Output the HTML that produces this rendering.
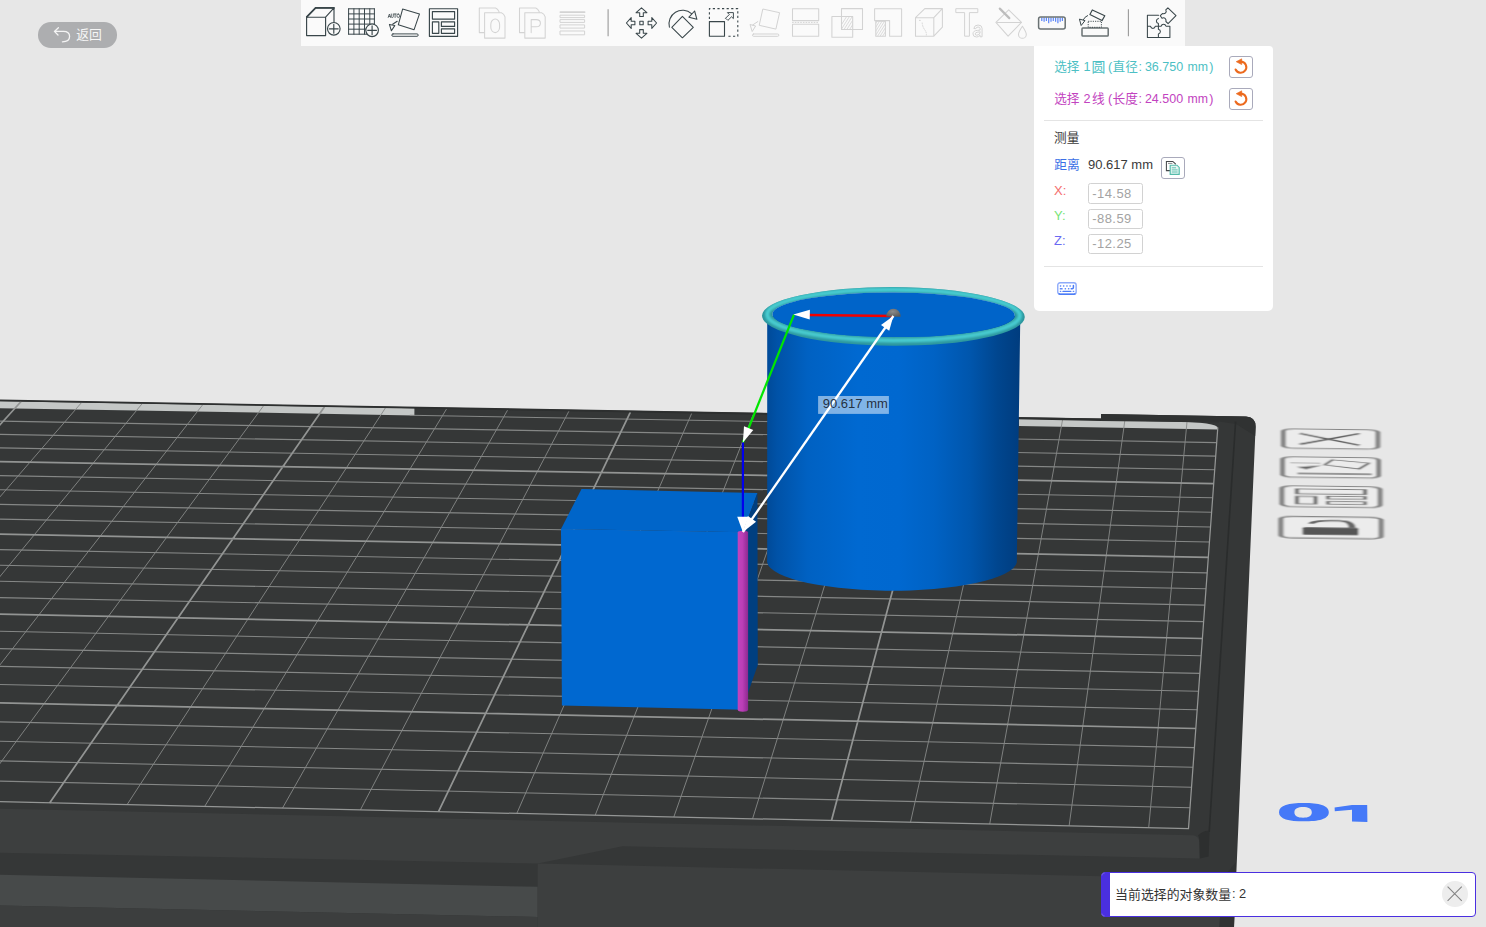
<!DOCTYPE html><html lang="zh"><head><meta charset="utf-8"><title>Measure</title><style>
html,body{margin:0;padding:0}
body{width:1486px;height:927px;overflow:hidden;position:relative;background:#e7e7e7;font-family:"Liberation Sans",sans-serif;}
.abs{position:absolute}
.t{position:absolute;white-space:nowrap;line-height:1;}
.h{color:transparent}
.toolbar{position:absolute;left:301px;top:0;width:884px;height:46px;background:#fafafa}
.back{position:absolute;left:38px;top:22px;width:78.6px;height:25.6px;border-radius:12.8px;background:#adaeb0}
.panel{position:absolute;left:1034px;top:46px;width:239px;height:264.6px;background:#fff;border-radius:0 4px 5px 5px}
.btn{position:absolute;width:22px;height:19.7px;border:1px solid #a9aabb;border-radius:3px;background:#fff}
.inp{position:absolute;left:54.4px;width:52.2px;height:18.2px;border:1px solid #d2d2d2;border-radius:2.5px;background:#fff}
.sep{position:absolute;left:10px;width:219px;height:1px;background:#e4e4e4}
.notif{position:absolute;left:1101px;top:872px;width:373px;height:43px;border:1px solid #4a2fe0;border-radius:4px;background:#fff;overflow:hidden}
.notif .bar{position:absolute;left:0;top:0;width:7.6px;height:43px;background:#4a2fe0}
.close{position:absolute;left:340.4px;top:8.4px;width:25.4px;height:25.4px;border-radius:50%;background:#ededed}

</style></head><body>
<svg width="1486" height="927" viewBox="0 0 1486 927" style="position:absolute;left:0;top:0">
<defs>
<linearGradient id="cyl" x1="0" x2="1" y1="0" y2="0">
<stop offset="0" stop-color="#004a98"/><stop offset="0.04" stop-color="#0052a7"/><stop offset="0.16" stop-color="#0061c2"/><stop offset="0.36" stop-color="#0069d1"/><stop offset="0.52" stop-color="#0068d0"/><stop offset="0.66" stop-color="#0062c4"/><stop offset="0.8" stop-color="#0056ad"/><stop offset="0.91" stop-color="#00468f"/><stop offset="1" stop-color="#003c7e"/>
</linearGradient>
<linearGradient id="mag" x1="0" x2="1" y1="0" y2="0"><stop offset="0" stop-color="#c044bd"/><stop offset="0.45" stop-color="#bb3eb7"/><stop offset="1" stop-color="#8c2a90"/></linearGradient>
<radialGradient id="dome" cx="0.45" cy="0.35" r="0.7"><stop offset="0" stop-color="#8c8c8c"/><stop offset="1" stop-color="#5a5a5a"/></radialGradient>
<filter id="b1" x="-10%" y="-30%" width="120%" height="160%"><feGaussianBlur stdDeviation="1.3"/></filter>
<filter id="bx" x="-5%" y="-20%" width="110%" height="140%"><feGaussianBlur stdDeviation="1.1 0.45"/></filter>
<filter id="b01" x="-5%" y="-20%" width="110%" height="140%"><feGaussianBlur stdDeviation="0.7 0.5"/></filter>
<clipPath id="ringclip"><path clip-rule="evenodd" d="M762,316.4a131.4,29.3 0 1,0 262.8,0a131.4,29.3 0 1,0 -262.8,0Z M772.4,314.8a121.2,22.3 0 1,0 242.4,0a121.2,22.3 0 1,0 -242.4,0Z"/></clipPath>
<clipPath id="gridclip"><polygon points="-792.6,783.8 1188.5,828.6 1218.2,422.3 -340.0,395.2"/></clipPath>
</defs>
<path d="M-2,400.2 L1101,418.6 L1101,414.0 L1246,416.6 Q1256,417.2 1255.6,427 L1234,927 L-2,927Z" fill="#353737"/>
<path d="M1101,418.6 L1101,414.0 L1246,416.6 Q1256,417.2 1255.6,427 L1255.2,436 L1236,424 L1219,421.6Z" fill="#303232"/>
<polygon points="-2.0,401.1 414.4,408.3 414.4,415.4 -2.0,408.1" fill="#c4c7c6"/>
<path d="M1019.0,418.8 L1171.5,421.5 Q1218.2,422.3 1217.8,428.1 L1217.7,429.5 L1019.0,426.0 Z" fill="#c4c7c6"/>
<path d="M-640.8,787.2 L-220.0,397.3 M-564.7,789.0 L-159.9,398.3 M-488.5,790.7 L-99.7,399.4 M-412.1,792.4 L-39.3,400.4 M-258.8,795.9 L81.6,402.5 M-181.9,797.6 L142.2,403.6 M-104.9,799.4 L202.8,404.6 M-27.7,801.1 L263.6,405.7 M127.1,804.6 L385.5,407.8 M204.7,806.4 L446.6,408.9 M282.5,808.1 L507.7,409.9 M360.4,809.9 L569.0,411.0 M516.8,813.4 L691.8,413.1 M595.2,815.2 L753.4,414.2 M673.8,817.0 L815.0,415.3 M752.6,818.7 L876.8,416.4 M910.5,822.3 L1000.6,418.5 M989.7,824.1 L1062.6,419.6 M1069.1,825.9 L1124.8,420.7 M1148.7,827.7 L1187.0,421.8" stroke="#878988" stroke-width="0.9" fill="none"/>
<path d="M-769.4,763.9 L1190.0,807.7 M-746.7,744.4 L1191.5,787.2 M-724.5,725.4 L1193.0,767.2 M-702.7,706.7 L1194.4,747.6 M-660.6,670.5 L1197.2,709.7 M-640.2,653.0 L1198.5,691.3 M-620.2,635.8 L1199.8,673.4 M-600.7,619.0 L1201.1,655.8 M-562.6,586.4 L1203.6,621.6 M-544.2,570.5 L1204.8,605.1 M-526.1,555.0 L1206.0,588.8 M-508.3,539.8 L1207.2,572.9 M-473.9,510.1 L1209.4,542.0 M-457.1,495.8 L1210.5,527.0 M-440.6,481.6 L1211.6,512.3 M-424.5,467.8 L1212.7,497.8 M-393.1,440.8 L1214.7,469.7 M-377.8,427.6 L1215.7,456.1 M-362.7,414.7 L1216.7,442.6 M409.8,415.3 L1017.7,426.0" stroke="#858786" stroke-width="1.1" fill="none"/>
<path d="M-716.8,785.5 L-280.0,396.2 M-335.5,794.1 L21.1,401.5 M49.6,802.9 L324.5,406.7 M438.5,811.6 L630.4,412.1 M831.5,820.5 L938.6,417.4 M-681.5,688.4 L1195.8,728.5 M-581.5,602.5 L1202.4,638.5 M-490.9,524.8 L1208.3,557.3 M-408.6,454.1 L1213.7,483.7" stroke="#929493" stroke-width="1.75" fill="none"/>
<path d="M-792.6,783.8 L1188.5,828.6 L1217.8,427.5" stroke="#949695" stroke-width="1.25" fill="none"/>
<path d="M-2,399.5 L1101,418.5 L1101,420.9 L-2,401.1Z" fill="#2d2f2f"/>
<path d="M1101,418.5 L1219,421.0 L1219,422.4 L1101,420.9Z" fill="#303232"/>
<path d="M1235.6,421.5 L1209.2,832" stroke="#2a2c2c" stroke-width="1.6" fill="none"/>
<path d="M-2,808.6 L1192,835.2 Q1199,835.6 1199.4,842 L1199.8,858.5 L622.5,846.2 L537.7,863.6 L-2,852.6Z" fill="#3d3f3f"/>
<path d="M1198,835.6 Q1203,830.6 1208.4,830.8 Q1209.6,831 1209.5,833 L1208.6,856.4 L1199.8,858.6 L1199.4,842 Q1199.4,837 1198,835.6Z" fill="#2d2f2f"/>
<path d="M-2,874.8 L537.7,886.8 L537.7,917 L-2,905.4Z" fill="#474a4a"/>
<path d="M-2,905.4 L537.7,917 L537.7,927 L-2,927Z" fill="#3c3e3e"/>
<path d="M537.7,863.6 L1222,878.9 L1219.5,927 L537.7,927Z" fill="#3d3f3f"/>
<path d="M1222,878.9 L1236,862 L1234,927 L1219.5,927Z" fill="#303232"/>
<polygon points="561,528.9 581.5,489.1 757.4,493 742.9,532.3" fill="#0065c9"/>
<polygon points="742.9,532.3 757.4,493 757.8,665 742.9,707.6" fill="#003f80"/>
<polygon points="561,528.9 742.9,532.3 742.9,709.8 561.9,705.5" fill="#0068d0"/>
<path d="M767.2,316 L767.2,559.6 A124.9,29.6 0 0,0 1016.8,562.6 L1020.3,316Z" fill="url(#cyl)"/>
<g transform="rotate(0.3 893.4 316)">
<path fill-rule="evenodd" d="M762,316.4a131.4,29.3 0 1,0 262.8,0a131.4,29.3 0 1,0 -262.8,0Z M772.4,314.8a121.2,22.3 0 1,0 242.4,0a121.2,22.3 0 1,0 -242.4,0Z" fill="#2d979e"/>
<g clip-path="url(#ringclip)"><ellipse cx="893.5" cy="315.1" rx="126.4" ry="25.4" fill="none" stroke="#48cdd1" stroke-width="4.2" filter="url(#b1)"/></g>
<ellipse cx="893.6" cy="314.8" rx="121.2" ry="22.3" fill="#0064c9"/>
</g>
<path d="M737.7,532.4 A5.2,1.6 0 0,1 748.1,532.4 L748.1,709.6 A5.2,2.2 0 0,1 737.7,709.6Z" fill="url(#mag)"/>
<path d="M808,314.9 L893.4,316" stroke="#f20000" stroke-width="2.5"/>
<path d="M886.2,316.6 A7.2,8 0 0,1 900.6,316.8Z" fill="url(#dome)"/>
<path d="M794,314.6 L742.9,442.5" stroke="#00e600" stroke-width="2.2"/>
<path d="M742.9,442.5 L742.9,520" stroke="#0000ee" stroke-width="2.2"/>
<path d="M742.9,532 L893.4,316" stroke="#fff" stroke-width="2.3"/>
<polygon points="793.3,314.4 809.9,309.8 809.7,319.6" fill="#fff"/>
<polygon points="742.9,442.5 744.0,426.3 753.3,430.0" fill="#fff"/>
<polygon points="742.9,532.0 737.2,516.8 748.6,516.8" fill="#fff"/>
<polygon points="893.4,316.0 889.2,330.8 881.0,325.0" fill="#fff"/>
<polygon points="742.9,532.0 747.9,516.0 756.1,521.7" fill="#fff"/>
<rect x="818.1" y="396" width="70.8" height="17.9" fill="rgba(255,255,255,0.5)"/>
<g transform="matrix(0.9940,0.0119,0,0.2020,1280.90,428.30)" filter="url(#bx)">
<rect x="2.5" y="2.5" width="95" height="95" rx="11" fill="#ececec" stroke="#868686" stroke-width="5"/>
<path d="M19,24 L79,80 M79,22 L19,78" stroke="#5c5c5c" stroke-width="5.5" fill="none"/>
</g>
<g transform="matrix(1.0100,0.0121,0,0.2130,1280.10,456.20)" filter="url(#bx)">
<rect x="2.5" y="2.5" width="95" height="95" rx="11" fill="#ececec" stroke="#868686" stroke-width="5"/>
<path d="M44,38 L52,14 L88,28 L78,56 Z" stroke="#707070" stroke-width="3.5" fill="none"/><path d="M10,30 L40,30" stroke="#8a8a8a" stroke-width="3"/><path d="M42,40 L16,50 L26,60 Z" fill="#6a6a6a"/><path d="M20,80 L88,80" stroke="#7a7a7a" stroke-width="7" stroke-linecap="round"/>
</g>
<g transform="matrix(1.0320,0.0124,0,0.2180,1279.40,485.20)" filter="url(#bx)">
<rect x="2.5" y="2.5" width="95" height="95" rx="11" fill="#ececec" stroke="#868686" stroke-width="5"/>
<rect x="17" y="16" width="66" height="22" stroke="#707070" stroke-width="4" fill="none"/><rect x="17" y="50" width="18" height="34" stroke="#707070" stroke-width="4" fill="none"/><rect x="47" y="48" width="36" height="12" stroke="#707070" stroke-width="3.6" fill="none"/><rect x="47" y="72" width="36" height="12" stroke="#707070" stroke-width="3.6" fill="none"/>
</g>
<g transform="matrix(1.0540,0.0126,0,0.2270,1278.30,515.60)" filter="url(#bx)">
<rect x="2.5" y="2.5" width="95" height="95" rx="11" fill="#ececec" stroke="#868686" stroke-width="5"/>
<path d="M31,34 Q34,20 50,20 L58,20 Q70,20 70,50" stroke="#666" stroke-width="6.5" fill="none"/><rect x="23" y="50" width="53" height="33" rx="4" fill="#565656"/>
</g>
<g filter="url(#b01)" fill="#4479f8">
<path fill-rule="evenodd" d="M1279,812.2 C1279,805.2 1289,803.1 1303.8,803.1 C1318.6,803.1 1328.8,805.2 1328.8,812.2 C1328.8,819.2 1318.6,821.3 1303.8,821.3 C1289,821.3 1279,819.2 1279,812.2Z M1294.4,812.3 C1294.4,808.2 1298,806.9 1303.1,806.9 C1308.2,806.9 1311.8,808.2 1311.8,812.3 C1311.8,816.4 1308.2,817.7 1303.1,817.7 C1298,817.7 1294.4,816.4 1294.4,812.3Z"/>
<path d="M1334.6,807.6 L1352,805 L1367.2,805 L1367.4,821.9 L1352,821.5 L1352,809.8 L1334.8,811.2Z"/>
</g>
</svg>
<div class="t" id="lbl" style="left:822.8px;top:396.4px;font-size:13px;color:rgba(22,32,44,.9);line-height:15px">90.617 mm</div>
<div class="toolbar"><svg width="884" height="46" viewBox="301 0 884 46" style="position:absolute;left:0;top:0" fill="none" stroke-linejoin="round" stroke-linecap="round"><g stroke="#39464a" stroke-width="1.15"><path d="M306.6,17.2 H325.6 V35.6 H306.6Z M306.6,17.2 L315.6,7.8 H334 L325.6,17.2 M334,7.8 V22"/><path d="M306.8,16.9 L315.6,7.9 H334" stroke-width="1.7"/><circle cx="333.8" cy="28.8" r="6.3" fill="#fafafa"/><path d="M333.8,24.4 V33.2 M329.4,28.8 H338.2"/></g><g stroke="#39464a" stroke-width="1"><path d="M348.6,8.8 V34.2 M353.9,8.8 V34.2 M359.2,8.8 V34.2 M364.5,8.8 V34.2 M369.8,8.8 V34.2 M374.4,8.8 V34.2 M348.6,8.8 H374.4 M348.6,13.9 H374.4 M348.6,19.0 H374.4 M348.6,24.1 H374.4 M348.6,29.2 H374.4 M348.6,34.2 H374.4 "/><circle cx="372.1" cy="30.3" r="6.3" fill="#fafafa" stroke-width="1.15"/><path d="M372.1,25.9 V34.7 M367.7,30.3 H376.5" stroke-width="1.15"/></g><g stroke="#39464a" stroke-width="1.05"><path d="M402.6,9.1 L419.5,13.9 L414.1,29.7 L398.3,24.8Z"/><path d="M397.2,21.2 L392.6,24.2"/><path d="M389.4,24.4 L394.8,25.6 L391.4,30.8Z"/><rect x="391.8" y="33.9" width="26.4" height="2.4" rx="1.2" stroke-width="0.95"/><path d="M388.2,17.5 L389.4,14 L390.6,17.5 M388.7,16.4 H390.1 M391.3,14 V16.6 Q391.3,17.5 392.3,17.5 Q393.3,17.5 393.3,16.6 V14 M393.9,14 H396.3 M395.1,14 V17.5 M398.2,14 Q399.6,14 399.6,15.75 Q399.6,17.5 398.2,17.5 Q396.9,17.5 396.9,15.75 Q396.9,14 398.2,14Z" stroke-width="0.75"/></g><g stroke="#39464a" stroke-width="1.15"><rect x="429.4" y="8.7" width="28.2" height="27.6"/><rect x="432.4" y="11.6" width="22.2" height="7.5"/><rect x="432.4" y="21.9" width="6.4" height="11.4"/><rect x="441.4" y="21.9" width="13.2" height="4.5"/><rect x="441.4" y="28.9" width="13.2" height="4.4"/></g><g stroke="#d3d3d3" stroke-width="1.05" transform="translate(0.0,0)"><path d="M484.6,32.6 H479.3 V8 H495.6 Q497.8,8.8 499,11.6 V12.6"/><path d="M484.6,12.8 H501.4 Q504,13.8 505,16.8 V38.1 H484.6Z" fill="#fafafa"/><rect x="490.8" y="19" width="8.8" height="13.6" rx="4.4" ry="5.4"/></g><g stroke="#d3d3d3" stroke-width="1.05" transform="translate(40.2,0)"><path d="M484.6,32.6 H479.3 V8 H495.6 Q497.8,8.8 499,11.6 V12.6"/><path d="M484.6,12.8 H501.4 Q504,13.8 505,16.8 V38.1 H484.6Z" fill="#fafafa"/><path d="M491,32.6 V19.6 H496 Q500.2,19.6 500.2,23.2 Q500.2,26.8 496,26.8 H491"/></g><g stroke="#d3d3d3" stroke-width="1"><path d="M560.4,12.1 H584.6" stroke-width="1.8"/><rect x="560.4" y="15.2" width="24.2" height="2.4"/><rect x="560.4" y="19.6" width="24.2" height="2.8"/><rect x="560.4" y="24.9" width="24.2" height="3.2"/><rect x="560.4" y="31" width="24.2" height="3.8"/></g><path d="M608.1,9.2 V36.3 M1128.4,9.2 V36.3" stroke="#9a9a9a" stroke-width="1.1" stroke-linecap="butt"/><g stroke="#39464a" stroke-width="1.05" transform="translate(641.5,23)"><path d="M0,-15.1 L5.4,-10.3 H1.8 V-6.6 H-1.8 V-10.3 H-5.4Z" transform="rotate(0)"/><path d="M0,-15.1 L5.4,-10.3 H1.8 V-6.6 H-1.8 V-10.3 H-5.4Z" transform="rotate(90)"/><path d="M0,-15.1 L5.4,-10.3 H1.8 V-6.6 H-1.8 V-10.3 H-5.4Z" transform="rotate(180)"/><path d="M0,-15.1 L5.4,-10.3 H1.8 V-6.6 H-1.8 V-10.3 H-5.4Z" transform="rotate(270)"/><rect x="-1.7" y="-1.7" width="3.4" height="3.4"/></g><g stroke="#39464a" stroke-width="1.05"><path d="M682.4,16.4 L693.3,27.3 L682.4,37.8 L671.8,27.3Z"/><path d="M669.4,27.2 A13.6,13.6 0 0,1 691.5,13.6"/><path d="M688.9,17.2 L694.6,11 L696.9,19.3Z"/></g><g stroke="#39464a" stroke-width="1.1"><path d="M709.4,19 V8.6 H737.8 V36.2 H727" stroke-dasharray="2.2,2.4" stroke-linecap="butt"/><rect x="709.4" y="21.6" width="15.1" height="14.6"/><path d="M726.4,18.9 L727.9,20.4 L731.5,16.8 L733.4,18.6 V12.6 H727.4 L729.3,14.5 L725.7,18.1Z" stroke-width="0.95"/></g><g stroke="#d3d3d3" stroke-width="1"><path d="M763.2,9.1 L779.6,12.7 L775.9,29.1 L759.6,25.4Z"/><path d="M757.8,21.6 L752.6,25"/><path d="M750.4,24.6 L755.6,26 L752.4,31.2Z"/><rect x="752.5" y="34" width="26.3" height="2.3" rx="1.1"/></g><g stroke="#d3d3d3" stroke-width="1.05"><rect x="792.5" y="8.8" width="26.2" height="11.8"/><rect x="792.5" y="24.3" width="26.2" height="12"/><path d="M792.5,22.4 H818.8" stroke-dasharray="0.8,1.9" stroke-width="1"/></g><g stroke="#d3d3d3" stroke-width="1.05"><rect x="841.5" y="8.6" width="21" height="20.8"/><rect x="831.9" y="16.5" width="20.8" height="20.8"/><clipPath id="c13"><rect x="841.5" y="16.5" width="11.2" height="12.9"/></clipPath><path d="M838.6,29.2 L846.6,16.6 M841.4,29.2 L849.4,16.6 M844.2,29.2 L852.2,16.6 M847.0,29.2 L855.0,16.6 M849.8,29.2 L857.8,16.6 " stroke-width="0.8" clip-path="url(#c13)"/></g><g stroke="#d3d3d3" stroke-width="1.05"><path d="M874.6,8.8 H901.6 V36.2 H889.6 V20.6 H874.6Z"/><rect x="875.8" y="21.3" width="9.6" height="15"/><clipPath id="c14"><rect x="875.8" y="21.3" width="9.6" height="15"/></clipPath><path d="M867.5,36.3 L877.0,21.3 M870.0,36.3 L879.5,21.3 M872.5,36.3 L882.0,21.3 M875.0,36.3 L884.5,21.3 M877.5,36.3 L887.0,21.3 M880.0,36.3 L889.5,21.3 M882.5,36.3 L892.0,21.3 " stroke-width="0.8" clip-path="url(#c14)"/></g><g stroke="#d3d3d3" stroke-width="1.05"><path d="M915.5,17.7 H933.8 V36.2 H915.5Z M915.5,17.7 L924.8,8.6 H942.4 L933.8,17.7 M942.4,8.6 V27.2 L933.8,36.2"/><path d="M919.4,20.4 H921.6 M922.2,23 Q922.6,27 924.6,29.6 T926.4,35" stroke-dasharray="0.9,1.5" stroke-width="0.9"/></g><g stroke="#d3d3d3" stroke-width="1"><path d="M956.2,8.7 H977.8 V12.6 H969.4 V36.2 H964.6 V12.6 H956.2Z"/><path transform="translate(-108.6,-3.4) scale(1.11)" d="M975.2,28.4 Q975.6,25.6 979,25.6 Q982.6,25.6 982.6,28.6 V36.2 H980.8 V34.8 Q979.6,36.4 977.6,36.4 Q974.4,36.4 974.4,33.6 Q974.4,30.6 978.6,30.4 L980.8,30.2 V28.8 Q980.8,27.4 979,27.4 Q977.2,27.4 977,28.6Z M980.8,31.8 L978.8,32 Q976.4,32.2 976.4,33.6 Q976.4,34.8 977.9,34.8 Q980.8,34.6 980.8,32.6Z" stroke-width="0.9"/></g><g stroke="#d3d3d3" stroke-width="1.05"><path d="M1008.7,9.8 L1021.5,22.4 L1008.1,36.2 L995.9,22.4Z"/><path d="M997.4,22.4 H1021.5"/><path d="M999.8,8.6 L1009.3,18.1" stroke="#bdbdbd" stroke-width="2.2"/><path d="M1022.4,26.2 Q1018.5,32 1018.5,34.4 A3.9,3.9 0 0,0 1026.3,34.4 Q1026.3,32 1022.4,26.2Z"/></g><path d="M1041.8,17.6 V21.0 M1044.1,17.6 V21.8 M1046.4,17.6 V21.0 M1048.7,17.6 V23.2 M1051.0,17.6 V21.8 M1053.3,17.6 V21.0 M1055.6,17.6 V21.8 M1057.9,17.6 V23.2 M1060.2,17.6 V21.8 M1062.4,17.6 V21.0 " stroke="#5a86fa" stroke-width="1.2" stroke-linecap="butt"/><rect x="1038.6" y="16.9" width="26.6" height="12" rx="2" stroke="#697173" stroke-width="1.5"/><g stroke="#39464a"><rect x="1082" y="28.1" width="26.2" height="8" rx="0.8" stroke="#697173" stroke-width="1.5"/><path d="M1092.3,9.9 L1104.8,15.7 L1102,20.6 L1089.9,14.6Z" stroke-width="1.15"/><rect x="1088.2" y="21.3" width="13.2" height="6" stroke-dasharray="1.1,1.2" stroke-width="1" stroke-linecap="butt"/><path d="M1087.6,15.6 Q1084.6,16.8 1083.4,19.6" stroke-width="1"/><path d="M1079.8,19.2 L1085,20.6 L1081.4,25.2Z" stroke-width="1"/></g><g stroke="#39464a" stroke-width="1.05"><path d="M1158.6,15.2 H1147.4 V37.4 H1169.9 V26.4 M1147.4,26.2 H1150.4 Q1151,28.4 1152.9,28.4 Q1154.8,28.4 1155.4,26.2 H1158.4 M1158.4,37.4 V34 Q1160.4,33.2 1160.4,31.5 Q1160.4,29.8 1158.4,29.2 V26.2 M1158.4,26.2 V23.6 Q1156.4,23 1156.4,21 Q1156.4,19.2 1158.4,18.4 M1158.4,26.2 H1161.2 Q1161.6,24.2 1163.6,24.2 Q1165.4,24.2 1166,26.2 H1169.9"/><path d="M1167.9,7.9 L1176,15.7 L1168.1,23.6 L1165.9,21.5 Q1166.5,19.5 1165.1,18.3 Q1163.7,17.1 1162,18.2 L1160.3,15.7 L1162.4,13.6 Q1164.4,14.2 1165.6,12.9 Q1166.8,11.6 1165.8,9.9Z"/></g></svg></div>
<div class="back"><svg class="abs" style="left:0;top:0" width="79" height="26" viewBox="38 22 79 26" fill="none" stroke="#f4f4f4" stroke-width="1.3" stroke-linecap="round" stroke-linejoin="round"><path d="M58.4,27.8 L54.4,31.4 L58,35 M54.6,31.4 H63.4 Q69.6,31.4 69.6,36.6 Q69.6,41.8 62.4,41.8"/></svg><div class="t h" style="left:38.4px;top:6.4px;font-size:12.4px">返回</div></div>
<div class="panel">
<div class="t h" style="left:20.6px;top:14.7px;font-size:12.6px">选择</div>
<div class="t" id="r1n" style="left:49.60px;top:15.03px;font-size:12.60px;color:#4cbfc4;">1</div>
<div class="t h" style="left:58.4px;top:14.7px;font-size:12.6px">圆</div>
<div class="t" id="r1p" style="left:73.90px;top:15.03px;font-size:12.60px;color:#4cbfc4;">(</div>
<div class="t h" style="left:79px;top:14.7px;font-size:12.6px">直径</div>
<div class="t" id="r1c" style="left:104.60px;top:15.03px;font-size:12.60px;color:#4cbfc4;">:</div>
<div class="t" id="r1v" style="left:110.90px;top:15.12px;font-size:12.50px;color:#4cbfc4;">36.750</div>
<div class="t" id="r1m" style="left:153.50px;top:15.29px;font-size:12.30px;color:#4cbfc4;">mm</div>
<div class="t" id="r1q" style="left:175.20px;top:15.03px;font-size:12.60px;color:#4cbfc4;">)</div>
<div class="t h" style="left:20.6px;top:46.6px;font-size:12.6px">选择</div>
<div class="t" id="r2n" style="left:49.60px;top:46.93px;font-size:12.60px;color:#c243c0;">2</div>
<div class="t h" style="left:58.4px;top:46.6px;font-size:12.6px">线</div>
<div class="t" id="r2p" style="left:73.90px;top:46.93px;font-size:12.60px;color:#c243c0;">(</div>
<div class="t h" style="left:79px;top:46.6px;font-size:12.6px">长度</div>
<div class="t" id="r2c" style="left:104.60px;top:46.93px;font-size:12.60px;color:#c243c0;">:</div>
<div class="t" id="r2v" style="left:110.90px;top:47.02px;font-size:12.50px;color:#c243c0;">24.500</div>
<div class="t" id="r2m" style="left:153.50px;top:47.19px;font-size:12.30px;color:#c243c0;">mm</div>
<div class="t" id="r2q" style="left:175.20px;top:46.93px;font-size:12.60px;color:#c243c0;">)</div>
<div class="btn" style="left:195.4px;top:10px"><svg class="abs" style="left:0;top:0" width="23" height="21" viewBox="0 0 23 21" fill="none"><path d="M11.3,4.6 A5.6,5.6 0 1,1 5.6,12.5" stroke="#ec6a1e" stroke-width="2.1" stroke-linecap="round"/><path d="M6.2,4.7 L11.7,1.8 L11.7,7.6Z" fill="#ec6a1e" stroke="#ec6a1e" stroke-width="0.6" stroke-linejoin="round"/></svg></div>
<div class="btn" style="left:195.4px;top:42px"><svg class="abs" style="left:0;top:0" width="23" height="21" viewBox="0 0 23 21" fill="none"><path d="M11.3,4.6 A5.6,5.6 0 1,1 5.6,12.5" stroke="#ec6a1e" stroke-width="2.1" stroke-linecap="round"/><path d="M6.2,4.7 L11.7,1.8 L11.7,7.6Z" fill="#ec6a1e" stroke="#ec6a1e" stroke-width="0.6" stroke-linejoin="round"/></svg></div>
<div class="sep" style="top:74px"></div>
<div class="t h" style="left:20.5px;top:85px;font-size:12.6px">测量</div>
<div class="t h" style="left:20.5px;top:112px;font-size:12.6px">距离</div>
<div class="t" id="dist" style="left:54.00px;top:111.90px;font-size:13.00px;color:#3a3a3a;">90.617 mm</div>
<div class="btn" style="left:127.3px;top:111.2px"><svg class="abs" style="left:0;top:0" width="23" height="21" viewBox="0 0 23 21" fill="none"><path d="M8.4,12.6 H4.4 V3.4 H10.8 L13.4,5.8 V6.6" stroke="#45494b" stroke-width="1.05"/><path d="M6,5.4 H10.4" stroke="#6a6e70" stroke-width="0.8"/><path d="M8.2,7.2 H15 L17.2,9.4 V16.4 H8.2Z" fill="#e4f5f1" stroke="#55bbab" stroke-width="1.15"/><path d="M9.8,9.8 H14 M9.8,11.9 H15.6 M9.8,14 H15.6" stroke="#63c2b3" stroke-width="1"/></svg></div>
<div class="t" id="ax0" style="left:20.00px;top:138.20px;font-size:13.00px;color:#f46e6e;">X:</div>
<div class="inp" style="top:137.4px"></div>
<div class="t" id="in0" style="left:58.30px;top:140.70px;font-size:13.00px;color:#a3a3a3;letter-spacing:.42px">-14.58</div>
<div class="t" id="ax1" style="left:20.00px;top:163.25px;font-size:13.00px;color:#78e478;">Y:</div>
<div class="inp" style="top:162.5px"></div>
<div class="t" id="in1" style="left:58.30px;top:165.75px;font-size:13.00px;color:#a3a3a3;letter-spacing:.42px">-88.59</div>
<div class="t" id="ax2" style="left:20.00px;top:188.30px;font-size:13.00px;color:#6a6af2;">Z:</div>
<div class="inp" style="top:187.5px"></div>
<div class="t" id="in2" style="left:58.30px;top:190.80px;font-size:13.00px;color:#a3a3a3;letter-spacing:.42px">-12.25</div>
<div class="sep" style="top:220px"></div>
<svg class="abs" style="left:22.8px;top:236.2px" width="20" height="13.2" viewBox="0 0 20 13.2" fill="none"><rect x="0.75" y="0.75" width="18.4" height="11.5" rx="2.3" stroke="#8eabfa" stroke-width="1.4" fill="#fff"/><path d="M1.6,11.6 Q2.2,12.25 3.2,12.25 H16.8 Q17.8,12.25 18.4,11.6" stroke="#4c7df7" stroke-width="1.4"/><g fill="#5f8af8"><rect x="2.8" y="3.2" width="1.5" height="1.5" rx=".4"/><rect x="5.9" y="3.2" width="1.5" height="1.5" rx=".4"/><rect x="9.2" y="3.2" width="1.5" height="1.5" rx=".4"/><rect x="12.4" y="3.2" width="1.5" height="1.5" rx=".4"/><rect x="2.7" y="5.9" width="3" height="1.5" rx=".5"/><rect x="7.6" y="5.9" width="1.5" height="1.5" rx=".4"/><rect x="10.9" y="5.9" width="1.5" height="1.5" rx=".4"/><rect x="2.8" y="8.7" width="1.5" height="1.4" rx=".4"/><rect x="15.7" y="8.7" width="1.6" height="1.4" rx=".4"/></g><path d="M6,9.4 H13.8" stroke="#4c7df7" stroke-width="1.4" stroke-linecap="round"/><path d="M16.4,3.4 V5.6 Q16.4,6.7 15.2,6.7 H14.2" stroke="#4c7df7" stroke-width="1.5" stroke-linecap="round"/></svg>
</div>
<div class="notif"><div class="bar"></div><div class="t h" style="left:15px;top:15px;font-size:12.7px">当前选择的对象数量</div>
<div class="t" id="ncol" style="left:130.1px;top:15.36px;font-size:12.8px;color:#333">:</div><div class="t" id="n2" style="left:137.1px;top:15.36px;font-size:12.8px;color:#333">2</div>
<div class="close"><svg class="abs" style="left:0;top:0" width="25.4" height="25.4" viewBox="0 0 25.4 25.4"><path d="M5.6,5.6 L19.8,19.8 M19.8,5.6 L5.6,19.8" stroke="#858585" stroke-width="1.1"/></svg></div></div>
<svg width="1486" height="927" viewBox="0 0 1486 927" style="position:absolute;left:0;top:0;pointer-events:none" font-family="&quot;Liberation Sans&quot;, &quot;Noto Sans CJK SC&quot;, sans-serif">
<text x="76.19" y="39.37" font-size="12.82" fill="#f6f6f6">返回</text>
<text x="1054.13" y="71.23" font-size="12.7" fill="#4cbfc4">选择</text>
<text x="1091.48" y="71.66" font-size="13.84" fill="#4cbfc4">圆</text>
<text x="1112.62" y="71.21" font-size="12.66" fill="#4cbfc4">直径</text>
<text x="1054.13" y="103.13" font-size="12.7" fill="#c243c0">选择</text>
<text x="1092" y="103.11" font-size="12.66" fill="#c243c0">线</text>
<text x="1112.49" y="103.12" font-size="12.7" fill="#c243c0">长度</text>
<text x="1054.12" y="142.02" font-size="12.68" fill="#3a3a3a">测量</text>
<text x="1054.15" y="169.35" font-size="12.77" fill="#3b6fe6">距离</text>
<text x="1115.12" y="899.3" font-size="12.9" fill="#333">当前选择的对象数量</text>
</svg>
</body></html>
